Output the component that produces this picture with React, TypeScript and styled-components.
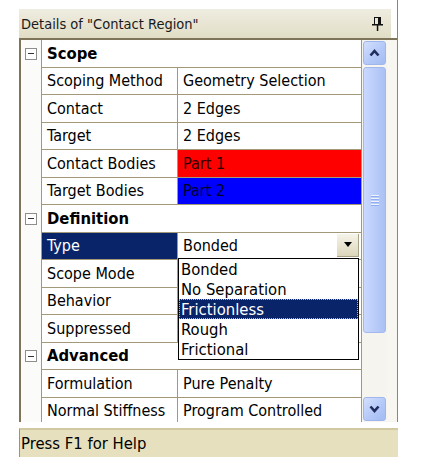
import React from 'react';
import styled, { createGlobalStyle, css } from 'styled-components';

const Global = createGlobalStyle`
  html, body { margin: 0; padding: 0; background: #ffffff; }
  body {
    font-family: "DejaVu Sans Condensed", "DejaVu Sans", sans-serif;
    font-size: 16px;
    color: #000;
  }
`;

const LINE = '#A39878';

const Page = styled.div`
  width: 427px;
  height: 462px;
  overflow: hidden;
  display: flex;
  flex-direction: column;
  padding-left: 19px;
  box-sizing: border-box;
`;

const Frame = styled.div`
  width: 379px;
  height: 422px;
  box-sizing: border-box;
  border-right: 1px solid #8E8770;
  padding-top: 9px;
  display: flex;
  flex-direction: column;
`;

const Header = styled.div`
  height: 29px;
  margin-right: 6px;
  display: flex;
  align-items: center;
  justify-content: space-between;
  padding: 0 8px 0 2px;
  background: linear-gradient(#EFEDE1, #E1DDC6);
  font-size: 14.5px;
  color: #1a1a1a;
`;

const Body = styled.div`
  flex: 1;
  min-height: 0;
  display: flex;
  border-top: 2px solid #7D745A;
  border-left: 2px solid #7D745A;
  background: #F7F6F0;
  overflow: hidden;
`;

const Grid = styled.div`
  width: 341px;
  position: relative;
  background: #fff;
  display: flex;
  flex-direction: column;
`;

const Row = styled.div`
  height: 27.5px;
  flex: none;
  display: grid;
  grid-template-columns: 21px 136px 184px;
`;

const Gutter = styled.div`
  border-right: 1px solid ${LINE};
  background: #FBFBF9;
  display: flex;
  align-items: center;
  justify-content: center;
`;

const ExpandBox = styled.div`
  width: 10px;
  height: 10px;
  border: 1px solid #8E8E8E;
  background: #fff;
  display: flex;
  align-items: center;
  justify-content: center;
  &::after {
    content: '';
    width: 6px;
    height: 1px;
    background: #333;
  }
`;

type Tone = 'plain' | 'red' | 'blue' | 'selected';

const Cell = styled.div<{ $tone?: Tone; $span?: boolean; $bold?: boolean }>`
  position: relative;
  border-right: 1px solid ${LINE};
  border-bottom: 1px solid ${LINE};
  display: flex;
  align-items: center;
  padding-left: 5px;
  white-space: nowrap;
  ${(p) => p.$span && css`grid-column: 2 / 4;`}
  ${(p) => p.$bold && css`font-weight: bold; font-size: 16.5px;`}
  ${(p) => p.$tone === 'red' && css`background: #FF0000; color: #2a0000;`}
  ${(p) => p.$tone === 'blue' && css`background: #0000FF; color: #000022;`}
  ${(p) => p.$tone === 'selected' && css`background: #0A246A; color: #fff;`}
`;

const ComboButton = styled.div`
  position: absolute;
  right: 2px;
  top: 1px;
  bottom: 2px;
  width: 21px;
  background: linear-gradient(#F6F4EA, #DCD6BA);
  border-right: 1px solid #A8A186;
  border-bottom: 1px solid #A8A186;
  display: flex;
  align-items: center;
  justify-content: center;
  &::after {
    content: '';
    border-left: 4px solid transparent;
    border-right: 4px solid transparent;
    border-top: 5px solid #000;
  }
`;

const DropList = styled.div`
  position: absolute;
  left: 0;
  top: calc(100% - 1px);
  width: 181px;
  box-sizing: border-box;
  border: 1px solid #000;
  background: #fff;
  z-index: 5;
  display: flex;
  flex-direction: column;
  font-size: 16.5px;
`;

const DropItem = styled.div<{ $active?: boolean }>`
  height: 20px;
  display: flex;
  align-items: center;
  padding-left: 2px;
  ${(p) =>
    p.$active &&
    css`
      background: #0A246A;
      color: #fff;
      outline: 1px dotted #C8B67A;
      outline-offset: -1px;
    `}
`;

const Scrollbar = styled.div`
  width: 25px;
  flex: none;
  display: flex;
  flex-direction: column;
  align-items: center;
  padding: 1px 0;
  box-sizing: border-box;
  background: #F5F4EE;
`;

const ScrollButton = styled.div`
  width: 23px;
  height: 24px;
  flex: none;
  box-sizing: border-box;
  border: 1px solid #9FB6EC;
  border-radius: 3px;
  background: linear-gradient(135deg, #D3DFFD, #B2C7F8 60%, #A3BBF3);
  display: flex;
  align-items: center;
  justify-content: center;
`;

const Thumb = styled.div`
  width: 23px;
  height: 266px;
  margin-top: 2px;
  flex: none;
  box-sizing: border-box;
  border: 1px solid #A3B9EE;
  border-radius: 3px;
  background: linear-gradient(90deg, #C9D8FE, #BACDF9 50%, #ABC1F4);
  display: flex;
  flex-direction: column;
  align-items: center;
  justify-content: center;
  gap: 1px;
`;

const Grip = styled.div`
  width: 8px;
  height: 1px;
  background: #EEF3FE;
  border-bottom: 1px solid #8FAEF0;
`;

const Spacer = styled.div`
  flex: 1;
`;

const StatusBar = styled.div`
  width: 379px;
  height: 29px;
  margin-top: 6px;
  box-sizing: border-box;
  border-top: 2px solid #D2C9A3;
  border-left: 1px solid #9C9376;
  background: #E7E0BF;
  display: flex;
  align-items: center;
  padding-left: 1px;
  font-size: 16.5px;
`;

const Chevron = ({ up }: { up?: boolean }) => (
  <svg width="11" height="8" viewBox="0 0 11 8">
    <polyline
      points={up ? '1.5,6.5 5.5,2 9.5,6.5' : '1.5,1.5 5.5,6 9.5,1.5'}
      fill="none"
      stroke="#1F2C5C"
      strokeWidth="2.6"
    />
  </svg>
);

const Pin = () => (
  <svg width="11" height="14" viewBox="0 0 11 14">
    <rect x="2.5" y="0.5" width="6" height="7" fill="none" stroke="#111" strokeWidth="1" />
    <rect x="6" y="1" width="2" height="6" fill="#111" />
    <rect x="0" y="7" width="11" height="1.5" fill="#111" />
    <rect x="4.8" y="8" width="1.5" height="6" fill="#111" />
  </svg>
);

type RowData =
  | { kind: 'group'; label: string }
  | { kind: 'prop'; label: string; value: string; tone?: Tone; labelTone?: Tone; combo?: boolean };

const rows: RowData[] = [
  { kind: 'group', label: 'Scope' },
  { kind: 'prop', label: 'Scoping Method', value: 'Geometry Selection' },
  { kind: 'prop', label: 'Contact', value: '2 Edges' },
  { kind: 'prop', label: 'Target', value: '2 Edges' },
  { kind: 'prop', label: 'Contact Bodies', value: 'Part 1', tone: 'red' },
  { kind: 'prop', label: 'Target Bodies', value: 'Part 2', tone: 'blue' },
  { kind: 'group', label: 'Definition' },
  { kind: 'prop', label: 'Type', value: 'Bonded', labelTone: 'selected', combo: true },
  { kind: 'prop', label: 'Scope Mode', value: '' },
  { kind: 'prop', label: 'Behavior', value: '' },
  { kind: 'prop', label: 'Suppressed', value: '' },
  { kind: 'group', label: 'Advanced' },
  { kind: 'prop', label: 'Formulation', value: 'Pure Penalty' },
  { kind: 'prop', label: 'Normal Stiffness', value: 'Program Controlled' },
];

const options = ['Bonded', 'No Separation', 'Frictionless', 'Rough', 'Frictional'];

export default function App() {
  return (
    <>
      <Global />
      <Page>
        <Frame>
          <Header>
            <span>Details of "Contact Region"</span>
            <Pin />
          </Header>
          <Body>
            <Grid>
              {rows.map((r, i) =>
                r.kind === 'group' ? (
                  <Row key={i}>
                    <Gutter>
                      <ExpandBox />
                    </Gutter>
                    <Cell $span $bold>
                      {r.label}
                    </Cell>
                  </Row>
                ) : (
                  <Row key={i}>
                    <Gutter />
                    <Cell $tone={r.labelTone}>{r.label}</Cell>
                    <Cell $tone={r.tone}>
                      {r.value}
                      {r.combo && (
                        <>
                          <ComboButton />
                          <DropList>
                            {options.map((o) => (
                              <DropItem key={o} $active={o === 'Frictionless'}>
                                {o}
                              </DropItem>
                            ))}
                          </DropList>
                        </>
                      )}
                    </Cell>
                  </Row>
                )
              )}
            </Grid>
            <Scrollbar>
              <ScrollButton>
                <Chevron up />
              </ScrollButton>
              <Thumb>
                <Grip />
                <Grip />
                <Grip />
                <Grip />
              </Thumb>
              <Spacer />
              <ScrollButton>
                <Chevron />
              </ScrollButton>
            </Scrollbar>
          </Body>
        </Frame>
        <StatusBar>Press F1 for Help</StatusBar>
      </Page>
    </>
  );
}
